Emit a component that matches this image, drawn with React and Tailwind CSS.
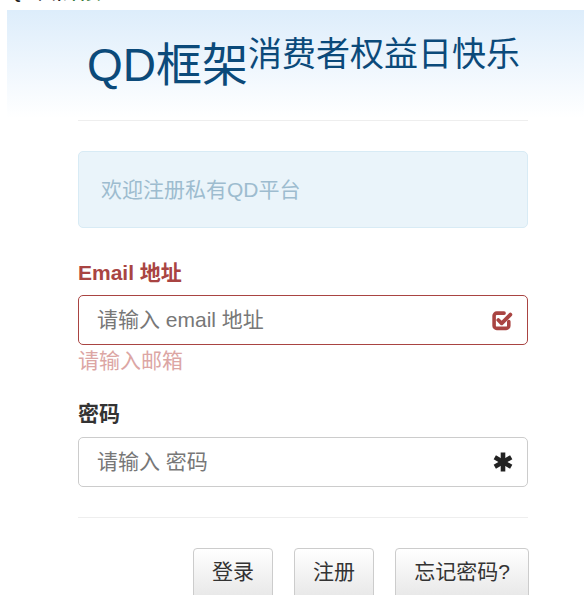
const font = { fontFamily: '"Liberation Sans", "Noto Sans CJK SC", sans-serif' };

const CheckSquare = () => (
  <svg width="21" height="21" viewBox="0 0 20 20" className="text-[#a94442]">
    <path
      d="M16 11V15a2.5 2.5 0 0 1-2.5 2.5H4.5A2.5 2.5 0 0 1 2 15V5.5A2.5 2.5 0 0 1 4.5 3h7"
      fill="none"
      stroke="currentColor"
      strokeWidth="3.4"
      strokeLinecap="round"
    />
    <path
      d="M6 9.5l3.2 3.2 8.3-8.3"
      fill="none"
      stroke="currentColor"
      strokeWidth="3.6"
      strokeLinecap="round"
      strokeLinejoin="round"
    />
  </svg>
);

const Asterisk = () => (
  <svg width="20" height="20" viewBox="0 0 20 20">
    <g stroke="#222" strokeWidth="4.6" strokeLinecap="butt">
      <line x1="10" y1="0.5" x2="10" y2="19.5" />
      <line x1="1.8" y1="5.25" x2="18.2" y2="14.75" />
      <line x1="1.8" y1="14.75" x2="18.2" y2="5.25" />
    </g>
  </svg>
);

const Button = ({ children, w }) => (
  <button
    className={`h-[54px] ${w} rounded-[4px] border border-[#ccc] bg-gradient-to-b from-white to-[#e6e6e6] text-[21px] text-[#333] shrink-0 pb-[6px]`}
  >
    {children}
  </button>
);

export default function App() {
  return (
    <div className="w-[584px] h-[595px] overflow-hidden bg-white" style={font}>
      {/* clipped nav text at very top */}
      <div className="h-[10px] overflow-hidden">
        <div className="-mt-[15px] pl-[10px] text-[15px] font-bold text-[#222] leading-[18px]">
          QD 框架 <span className="text-[#3a7a3a]">首页</span>
        </div>
      </div>

      {/* jumbotron */}
      <div className="ml-[7px] h-[108px] bg-gradient-to-b from-[#ddedfb] to-white">
        <h1 className="flex justify-center items-start pt-[25px] pl-[18px] pr-[2px] text-[#0b4a7a] font-normal">
          <span className="text-[46px] leading-[60px]">QD框架</span>
          <span className="text-[34px] leading-[38px]">消费者权益日快乐</span>
        </h1>
      </div>

      <div className="mx-[78px] w-[450px]">
        <div className="mt-[2px] border-t border-[#eee]" />

        <div className="mt-[30px] h-[77px] rounded-[5px] border border-[#d8ebf5] bg-[#eaf4fa] pl-[22px] flex items-center text-[21px] text-[#9dbccf]">
          欢迎注册私有QD平台
        </div>

        <div className="mt-[30px] text-[21px] font-bold text-[#a94442] leading-[30px]">
          Email 地址
        </div>
        <div className="mt-[7px] h-[50px] rounded-[5px] border border-[#a94442] flex items-center justify-between pl-[18px] pr-[14px]">
          <span className="text-[21px] text-[#777]">请输入 email 地址</span>
          <CheckSquare />
        </div>
        <div className="mt-[1px] text-[21px] text-[#dca6a4] leading-[30px]">请输入邮箱</div>

        <div className="mt-[23px] text-[21px] font-bold text-[#333] leading-[30px]">密码</div>
        <div className="mt-[8px] h-[50px] rounded-[5px] border border-[#ccc] flex items-center justify-between pl-[18px] pr-[14px]">
          <span className="text-[21px] text-[#777]">请输入 密码</span>
          <Asterisk />
        </div>

        <div className="mt-[30px] border-t border-[#eee]" />

        <div className="mt-[30px] flex justify-end gap-[21px] -mr-[1px]">
          <Button w="w-[80px]">登录</Button>
          <Button w="w-[80px]">注册</Button>
          <Button w="w-[134px]">忘记密码?</Button>
        </div>
      </div>
    </div>
  );
}
